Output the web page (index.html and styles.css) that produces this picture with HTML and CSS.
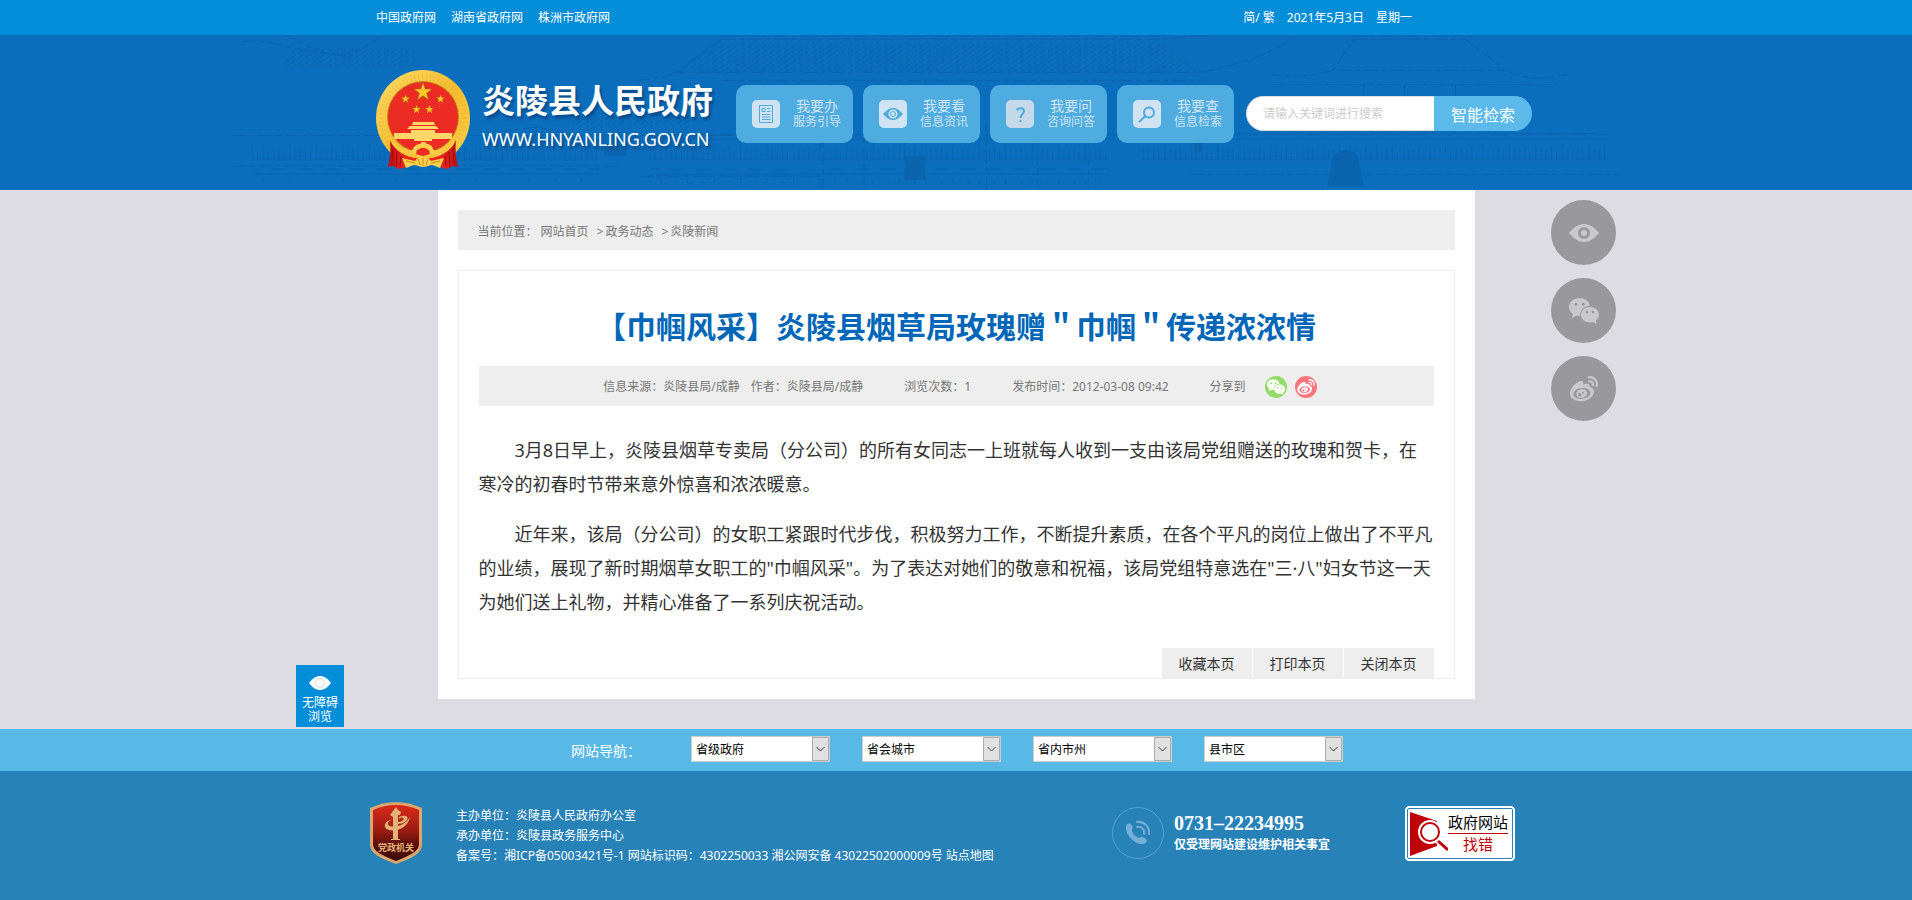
FILE: index.html
```
<!DOCTYPE html>
<html lang="zh-CN">
<head>
    <meta charset="UTF-8">
    <meta name="viewport" content="width=device-width, initial-scale=1.0">
    <title>炎陵县人民政府</title>
    <link rel="stylesheet" href="styles.css">
</head>
<body>

<!-- 公用图标 -->
<svg class="symbols" aria-hidden="true">
    <symbol id="eye" viewBox="0 0 30 18">
        <path fill="currentColor" fill-rule="evenodd" d="M0 9C5 3 10 0 15 0s10 3 15 9c-5 6-10 9-15 9S5 15 0 9zM15 3a6 6 0 1 0 0 12a6 6 0 1 0 0-12z"/>
        <circle cx="15" cy="9" r="3" fill="currentColor"/>
    </symbol>
    <symbol id="wechat" viewBox="0 0 30 26">
        <path fill="currentColor" fill-rule="evenodd" d="M10.500 0C4.700 0 0 4 0 9c0 2.800 1.500 5.300 3.900 7L3 20l4.600-2.400c1 .3 2.400.4 3.600.4C10.500 12 15 8 21 7.700C20 3 15.700 0 10.500 0zM7 4.800a1.500 1.500 0 1 1 0 3a1.500 1.500 0 1 1 0-3zM14.300 4.800a1.500 1.500 0 1 1 0 3a1.500 1.500 0 1 1 0-3z"/>
        <path fill="currentColor" fill-rule="evenodd" d="M21 9c-5 0-9 3.400-9 7.700s4 7.700 9 7.700c1 0 2-.2 3-.5l3.500 2l-.8-3.200c2-1.500 3.300-3.600 3.300-6C30 12.400 26 9 21 9zM18 12.800a1.300 1.300 0 1 1 0 2.600a1.300 1.300 0 1 1 0-2.600zM24 12.800a1.300 1.300 0 1 1 0 2.600a1.300 1.300 0 1 1 0-2.600z"/>
    </symbol>
    <symbol id="weibo" viewBox="0 0 26 24">
        <path fill="currentColor" fill-rule="evenodd" d="M9.500 4.500C11.500 4 13 5 12.200 8c3-1.300 6.800-1.300 6 2c2.500.8 4 2 4 4.600c0 4.500-5.500 8.700-11.700 8.700C4.600 23.300 0 20.500 0 16.200C0 11.500 5.500 5.300 9.500 4.500zM10.700 11C6.200 11.300 3 13.900 3.200 16.800s3.700 4.600 8 4.300s7.900-2.800 7.700-5.800s-3.800-4.500-8.200-4.300z"/>
        <path fill="currentColor" fill-rule="evenodd" d="M10.600 12.300c-3.200.6-5 2.800-4.600 5s3 3.300 5.600 2.700s4.600-2.700 4.200-5s-2.700-3.100-5.200-2.700zM9 15.800a1.700 1.500 0 1 0 .1 0zM12 14.600a.8.8 0 1 0 .1 0z"/>
        <path fill="none" stroke="currentColor" stroke-width="2" stroke-linecap="round" d="M17.500 1.200c4.500-.8 8.300 3 7.200 8M17.800 5c2.300-.3 3.800 1.300 3.200 3.500"/>
    </symbol>
    <symbol id="star" viewBox="-10 -10 20 20">
        <path d="M0-10L2.400-3.100L9.500-3.100L3.800 1.200L5.900 8.100L0 4L-5.900 8.100L-3.800 1.200L-9.500-3.100L-2.400-3.100z"/>
    </symbol>
</svg>

<div class="topbar">
    <div class="wrap topbar-inner">
        <nav class="top-links">
            <a href="#">中国政府网</a>
            <a href="#">湖南省政府网</a>
            <a href="#">株洲市政府网</a>
        </nav>
        <div class="top-date">
            <span><a href="#">简</a>/ <a href="#">繁</a></span>
            <span>2021年5月3日</span>
            <span>星期一</span>
        </div>
    </div>
</div>

<header class="header">
    <!-- 背景古建筑线稿 -->
    <svg class="header-art" viewBox="0 0 1500 155" preserveAspectRatio="xMidYMid slice" aria-hidden="true">
        <defs>
            <pattern id="tiles" width="7" height="5" patternUnits="userSpaceOnUse">
                <path d="M0 5L5 0"/>
            </pattern>
            <pattern id="fence" width="26" height="34" patternUnits="userSpaceOnUse">
                <path d="M0 2H26M0 22H26M3 22V12M8 22V8M13 22V14M19 22V6M24 22V11M0 31H16"/>
            </pattern>
        </defs>
        <g class="art-line">
            <path d="M520 6H950L1010 0M520 6L475 38H990M475 38C470 42 450 46 435 46M990 38C1030 30 1060 20 1080 4M520 46H990M50 8C80 4 110 22 150 20C170 16 180 8 190 0M90 0C110 10 130 24 160 22"/>
            <path d="M1140 6H1250L1290 36H1120L1140 6zM1120 36C1100 42 1080 44 1060 40M1290 36C1310 48 1340 44 1350 40M1060 50H1340M1150 50V92M1190 50V92M1240 50V92"/>
            <path d="M620 90V155M660 85V150M700 88V140M780 88V155M830 90V150M880 90V155M440 100H620M440 140H620M1000 98H1380M980 138H1400"/>
            <path d="M900 98C940 102 960 92 990 98M300 96L340 92L380 100M40 100H420M40 130H420"/>
        </g>
        <path class="art-fill" d="M950 88h60l8 8h-26v20h-8v-18h-34zM405 115l6-6h10l6 6v5h-22zM700 120h20v24h-20zM1120 120c10-8 14-8 24 0l6 30h-36z"/>
        <path fill="url(#tiles)" d="M520 8H950L990 38H475zM100 14H220V32H90zM380 80h110v12H370z"/>
        <path fill="url(#fence)" d="M450 96H900V148H450zM930 96H1390V130H930zM60 105H400V145H60z"/>
    </svg>

    <div class="wrap header-inner">
        <a class="logo" href="#">
            <svg class="emblem" viewBox="0 0 94 100" aria-hidden="true">
                <defs>
                    <linearGradient id="gold" x1="0" y1="0" x2="1" y2="1">
                        <stop offset="0" stop-color="#ffdd6b"/>
                        <stop offset="0.5" stop-color="#f6bd2f"/>
                        <stop offset="1" stop-color="#fbd04d"/>
                    </linearGradient>
                    <linearGradient id="drape" x1="0" y1="0" x2="1" y2="0">
                        <stop offset="0" stop-color="#b90f12"/>
                        <stop offset="0.25" stop-color="#ee2420"/>
                        <stop offset="0.75" stop-color="#ee2420"/>
                        <stop offset="1" stop-color="#b90f12"/>
                    </linearGradient>
                </defs>
                <ellipse cx="47" cy="48" rx="47" ry="48" fill="url(#gold)"/>
                <circle cx="47" cy="48" r="41" fill="none" stroke="#d99718" stroke-width="7" stroke-dasharray="1 3" opacity=".25"/>
                <circle cx="47" cy="47" r="36" fill="#c58112"/>
                <circle cx="47" cy="47" r="35" fill="#ec2b24"/>
                <g fill="#ffc928" stroke="#a66412" stroke-width=".6">
                    <use href="#star" x="37.500" y="12.500" width="19" height="19"/>
                    <use href="#star" x="25" y="24.500" width="9" height="9"/>
                    <use href="#star" x="60" y="24.500" width="9" height="9"/>
                    <use href="#star" x="36" y="35" width="9" height="9"/>
                    <use href="#star" x="49" y="35" width="9" height="9"/>
                </g>
                <g fill="#ffd768">
                    <path d="M37 52H58L59 55H36zM34 56H60L63 59H31zM35 60H59V63H35z"/>
                    <path d="M18 63H76V69H56V71H38V69H18z"/>
                </g>
                <!-- 红绸 -->
                <path fill="url(#drape)" d="M14 70C18 80 28 86 38 88H56C66 86 76 80 80 70C79 80 80 88 82 97L76 96L72 99L66 98L60 92H34L28 98L22 99L18 96L12 97C14 88 15 80 14 70z"/>
                <path fill="none" stroke="#9b1010" d="M17 78L16 95M21 82L20 97M25 86L24 96M77 78L78 95M73 82L74 97M69 86L70 96"/>
                <path fill="#f9c83f" d="M13 66C20 77 29 81 38 80L40 85C29 87 16 79 13 66zM81 66C74 77 65 81 56 80L54 85C65 87 78 79 81 66z"/>
                <!-- 齿轮和麦穗 -->
                <path fill="#fbd04d" d="M36 82C37 76 41 74 44 74L46 72H49L51 74C54 74 57 76 58 82L55 85C54 80 51 78 47 78S40 80 39 85z"/>
                <path fill="#ec2b24" d="M40 84C41 80 44 79 47 79S53 80 54 84L47 86z"/>
                <path fill="#fbd04d" d="M26 88L39 91C42 85 52 85 55 91L68 88L64 98L54 94C52 98 42 98 40 94L30 98z"/>
                <path fill="none" stroke="#d08a16" d="M30 91L39 93M64 91L55 93M42 89L44 95M47 88V96M52 89L50 95"/>
            </svg>
            <span class="logo-text">
                <strong>炎陵县人民政府</strong>
                <span>WWW.HNYANLING.GOV.CN</span>
            </span>
        </a>

        <nav class="quick">
            <a href="#">
                <svg viewBox="0 0 28 28" aria-hidden="true">
                    <rect width="28" height="28" rx="5"/>
                    <path class="ink" d="M7.500 5.500H20.500V22.500H7.500z"/>
                    <path class="ink" d="M10 8.500H13V11.500H10zM15 8.500H18.500M15 11.500H18.500M10 14.500H18.500M10 17H18.500M10 19.500H18.500"/>
                </svg>
                <span><b>我要办</b>服务引导</span>
            </a>
            <a href="#">
                <svg viewBox="0 0 28 28" aria-hidden="true">
                    <rect width="28" height="28" rx="5"/>
                    <path class="solid" fill-rule="evenodd" d="M4 14C8 9.500 11 8 14 8s6 1.500 10 6c-4 4.500-7 6-10 6s-6-1.500-10-6zM14 9.500a4.500 4.500 0 1 0 0 9a4.500 4.500 0 1 0 0-9z"/>
                    <circle class="ink" cx="14" cy="14" r="2.500"/>
                </svg>
                <span><b>我要看</b>信息资讯</span>
            </a>
            <a href="#">
                <svg class="dim" viewBox="0 0 28 28" aria-hidden="true">
                    <rect width="28" height="28" rx="5"/>
                    <path class="ink thick" d="M11 10.500C11.500 7.500 18 7 18 11C18 14 14.500 14 14.500 18M14.500 20V22"/>
                </svg>
                <span><b>我要问</b>咨询问答</span>
            </a>
            <a href="#">
                <svg viewBox="0 0 28 28" aria-hidden="true">
                    <rect width="28" height="28" rx="5"/>
                    <circle class="ink thick" cx="16" cy="12.500" r="5"/>
                    <path class="ink thick" d="M12.500 16L6 22"/>
                </svg>
                <span><b>我要查</b>信息检索</span>
            </a>
        </nav>

        <form class="search" action="#">
            <input type="text" placeholder="请输入关键词进行搜索" aria-label="关键词">
            <button type="button">智能检索</button>
        </form>
    </div>
</header>

<main class="main">
    <div class="crumbs">
        <span>当前位置：</span>
        <a href="#">网站首页</a>
        <span>&gt;<a href="#">政务动态</a></span>
        <span>&gt;<a href="#">炎陵新闻</a></span>
    </div>

    <article class="article">
        <h1>【巾帼风采】炎陵县烟草局玫瑰赠＂巾帼＂传递浓浓情</h1>
        <div class="meta">
            <span class="meta-source"><span>信息来源：炎陵县局/成静</span><span>作者：炎陵县局/成静</span></span>
            <span>浏览次数：1</span>
            <span>发布时间：2012-03-08 09:42</span>
            <span class="share">
                <span>分享到</span>
                <a class="share-wechat" href="#" aria-label="微信"><svg><use href="#wechat"/></svg></a>
                <a class="share-weibo" href="#" aria-label="微博"><svg><use href="#weibo"/></svg></a>
            </span>
        </div>
        <div class="content">
            <p>3月8日早上，炎陵县烟草专卖局（分公司）的所有女同志一上班就每人收到一支由该局党组赠送的玫瑰和贺卡，在寒冷的初春时节带来意外惊喜和浓浓暖意。</p>
            <p>近年来，该局（分公司）的女职工紧跟时代步伐，积极努力工作，不断提升素质，在各个平凡的岗位上做出了不平凡的业绩，展现了新时期烟草女职工的"巾帼风采"。为了表达对她们的敬意和祝福，该局党组特意选在"三·八"妇女节这一天为她们送上礼物，并精心准备了一系列庆祝活动。</p>
        </div>
        <div class="actions">
            <button type="button">收藏本页</button>
            <button type="button">打印本页</button>
            <button type="button">关闭本页</button>
        </div>
    </article>
</main>

<div class="site-nav">
    <span class="site-nav-label">网站导航：</span>
    <div class="site-nav-list">
        <select aria-label="省级政府"><option>省级政府</option></select>
        <select aria-label="省会城市"><option>省会城市</option></select>
        <select aria-label="省内市州"><option>省内市州</option></select>
        <select aria-label="县市区"><option>县市区</option></select>
    </div>
</div>

<footer class="footer">
    <div class="footer-inner">
        <a class="badge" href="#" aria-label="党政机关">
            <svg viewBox="0 0 52 62" aria-hidden="true">
                <defs>
                    <linearGradient id="shield" x1="0" y1="0" x2="0" y2="1">
                        <stop offset="0" stop-color="#d92a1a"/>
                        <stop offset="0.45" stop-color="#9c1c13"/>
                        <stop offset="0.7" stop-color="#5c0f0b"/>
                        <stop offset="1" stop-color="#3d0806"/>
                    </linearGradient>
                </defs>
                <path fill="#dba56c" d="M0 6Q26-6 52 6V42C52 52 42 56 26 62C10 56 0 52 0 42z"/>
                <path fill="url(#shield)" d="M3 8Q26-2 49 8V42C49 50 40 53 26 59C12 53 3 50 3 42z"/>
                <g fill="#e3b277">
                    <path d="M23 9L26 5L28 8L31 10L30 13H28V37H30V38H21V37H23V15L20 13z"/>
                    <path d="M29 15C36 12 40 15 36 19C34 21 31 22 28 22V20C32 20 35 17 33 16C32 15 30 16 29 17zM23 17C18 19 16 23 20 24C27 26 36 22 40 15C38 25 28 30 19 28C12 26 14 19 23 17z"/>
                </g>
                <text x="26" y="49" text-anchor="middle">党政机关</text>
            </svg>
        </a>
        <div class="footer-info">
            <p>主办单位：炎陵县人民政府办公室</p>
            <p>承办单位：炎陵县政务服务中心</p>
            <p>备案号：<a href="#">湘ICP备05003421号-1</a> 网站标识码：4302250033 <a href="#">湘公网安备 43022502000009号</a> <a href="#">站点地图</a></p>
        </div>
        <div class="phone">
            <svg viewBox="0 0 52 52" aria-hidden="true">
                <circle cx="26" cy="26" r="25.500" fill="none" stroke="#5a9fd0"/>
                <path fill="#73add8" d="M14 19C14 17 17 16 19 17C21 19 21 21 20 23C19 25 25 31 27 31C29 29 32 30 34 32C36 34 34 37 31 37C23 38 13 28 14 19z"/>
                <path fill="none" stroke="#73add8" stroke-width="2" stroke-linecap="round" d="M25 15C32 14 38 20 37 27M25 20C30 19 33 23 32 27"/>
            </svg>
            <div class="phone-text">
                <strong>0731–22234995</strong>
                <b>仅受理网站建设维护相关事宜</b>
            </div>
        </div>
        <a class="report" href="#">
            <svg viewBox="0 0 38 44" aria-hidden="true">
                <path fill="#bf0008" d="M0 0L27 9V34L0 44z"/>
                <circle cx="20" cy="20" r="12" fill="#fff"/>
                <path stroke="#fff" stroke-width="6" d="M27 28L38 39"/>
                <circle cx="20" cy="20" r="9" fill="#fff" stroke="#bf0008" stroke-width="2"/>
                <path stroke="#bf0008" stroke-width="3" d="M28 29L38 38"/>
            </svg>
            <span class="report-text"><span>政府网站</span><em>找错</em></span>
        </a>
    </div>
</footer>

<!-- 悬浮工具 -->
<a class="barrier-free" href="#">
    <svg viewBox="0 0 22 14" aria-hidden="true">
        <path fill="#fff" d="M0 7C4 2 7 0 11 0s7 2 11 7c-4 5-7 7-11 7S4 12 0 7z"/>
        <circle cx="11" cy="7" r="4.500" fill="none" stroke="#c4e3f7"/>
    </svg>
    <span>无障碍<br>浏览</span>
</a>
<div class="side-tools">
    <a href="#" aria-label="无障碍浏览"><svg class="side-eye"><use href="#eye"/></svg></a>
    <a href="#" aria-label="微信"><svg><use href="#wechat"/></svg></a>
    <a href="#" aria-label="微博"><svg><use href="#weibo"/></svg></a>
</div>

</body>
</html>
```
FILE: styles.css
```
* {
    box-sizing: border-box;
}
body {
    margin: 0;
    min-height: 100vh;
    display: flex;
    flex-direction: column;
    background: #dddce2;
    font-family: "Noto Sans", "Noto Sans CJK SC", "Microsoft YaHei", sans-serif;
    font-size: 12px;
    line-height: 20px;
    color: #777;
}
a {
    color: inherit;
    text-decoration: none;
}
p, h1 {
    margin: 0;
}
button, input, select {
    font-family: inherit;
    margin: 0;
}
svg {
    display: block;
    flex-shrink: 0;
}
.symbols {
    position: absolute;
    width: 0;
    height: 0;
}
.wrap {
    width: 100%;
    max-width: 1160px;
    margin: 0 auto;
}

/* 顶部 */
.topbar {
    background: #048dd9;
    color: #fff;
}
.topbar-inner {
    display: flex;
    justify-content: space-between;
    align-items: center;
    height: 35px;
    padding-right: 124px;
}
.top-links {
    display: flex;
    gap: 15px;
}
.top-date {
    display: flex;
    gap: 12px;
}

/* 头部 */
.header {
    display: grid;
    background: #0b6ebc;
    overflow: hidden;
}
.header-art,
.header-inner {
    grid-area: 1 / 1;
}
.header-art {
    width: 80%;
    height: 155px;
    margin: 0 auto;
    opacity: .6;
}
.art-line,
.header-art pattern path {
    fill: none;
    stroke: #0a5fa6;
    stroke-width: 1;
}
.header-art .art-line {
    stroke-dasharray: 14 3 5 4;
}
.art-fill {
    fill: #0a5fa6;
}
.header-inner {
    z-index: 1;
    display: flex;
    align-items: center;
    min-height: 155px;
    padding-top: 2px;
}
.logo {
    display: flex;
    flex-shrink: 0;
    align-items: center;
    gap: 12px;
    width: 360px;
    padding-top: 12px;
    color: #fff;
}
.emblem {
    width: 94px;
    height: 100px;
}
.logo-text {
    display: flex;
    flex-direction: column;
    gap: 6px;
    padding-bottom: 8px;
    white-space: nowrap;
    text-shadow: 2px 3px 3px rgba(0, 40, 90, .5);
}
.logo-text strong {
    font-size: 33px;
    line-height: 40px;
}
.logo-text span {
    font-size: 18px;
    line-height: 24px;
}
.quick {
    display: flex;
    gap: 10px;
}
.quick a {
    display: flex;
    align-items: center;
    gap: 13px;
    width: 117px;
    height: 58px;
    padding-left: 16px;
    border-radius: 10px;
    background: #4eace0;
    color: #d0e3f2;
}
.quick span {
    line-height: 15px;
    text-align: center;
}
.quick b {
    display: block;
    font-size: 14px;
    line-height: 16px;
    font-weight: normal;
}
.quick svg {
    width: 28px;
    height: 28px;
    fill: #d0e3f2;
}
.quick .dim {
    fill: #c6d9e8;
}
.quick .ink {
    fill: none;
    stroke: #4eace0;
}
.quick .thick {
    stroke-width: 2;
}
.quick .solid {
    fill: #4eace0;
}
.search {
    display: flex;
    flex: 1;
    min-width: 0;
    height: 35px;
    margin-left: 12px;
}
.search input {
    flex: 1;
    min-width: 0;
    padding: 0 16px;
    border: 1px solid #ddd;
    border-right: 0;
    border-radius: 18px 0 0 18px;
    background: #fff;
    font-size: 12px;
}
.search input::placeholder {
    color: #ccc;
}
.search button {
    width: 98px;
    padding: 0;
    border: 0;
    border-radius: 0 18px 18px 0;
    background: #5cbaeb;
    color: #fff;
    font-size: 16px;
}
.header-inner .search {
    margin-right: 4px;
}

/* 正文 */
.main {
    width: 100%;
    max-width: 1037px;
    margin: 0 auto 30px;
    padding: 20px;
    background: #fff;
}
.crumbs {
    display: flex;
    gap: 3px;
    padding: 12px 20px 8px;
    margin-bottom: 20px;
    background: #eee;
}
.crumbs a + span,
.crumbs span + span {
    margin-left: 5px;
}
.crumbs span a {
    margin-left: 2px;
}
.article {
    padding: 30px 20px 0;
    border: 1px solid #eee;
}
.article h1 {
    padding: 3px 0 17px;
    font-size: 30px;
    line-height: 45px;
    text-align: center;
    color: #0066b8;
}
.meta {
    display: flex;
    justify-content: center;
    align-items: center;
    gap: 41px;
    min-height: 40px;
    padding: 1px 0 0 8px;
    background: #eee;
}
.meta-source {
    display: flex;
    gap: 11px;
}
.share {
    display: flex;
    align-items: center;
    gap: 8px;
}
.share > span {
    margin-right: 11px;
}
.share a {
    display: flex;
    align-items: center;
    justify-content: center;
    width: 22px;
    height: 22px;
    border-radius: 50%;
    color: #fff;
}
.share svg {
    width: 18px;
    height: 16px;
}
.share-wechat {
    background: #93dc68;
}
.share-weibo {
    background: #fc7680;
}
.content {
    padding-top: 27px;
    font-size: 18px;
    line-height: 34px;
    color: #333;
}
.content p {
    margin-bottom: 16px;
    text-indent: 2em;
}
.actions {
    display: flex;
    justify-content: flex-end;
    gap: 1px;
    padding-top: 13px;
}
.actions button {
    width: 90px;
    height: 30px;
    padding: 0;
    border: 0;
    background: #eee;
    color: #333;
    font-size: 14px;
}

/* 网站导航 */
.site-nav {
    display: flex;
    justify-content: center;
    align-items: center;
    gap: 50px;
    min-height: 42px;
    padding: 0 0 2px 2px;
    background: #58b8e6;
}
.site-nav-label {
    padding-top: 4px;
    font-size: 14px;
    color: #fff;
}
.site-nav-list {
    display: flex;
    gap: 32px;
}
.site-nav select {
    width: 139px;
    height: 26px;
    padding: 0 20px 0 4px;
    border: 1px solid #ccc;
    border-radius: 0;
    appearance: none;
    background: #fff url("data:image/svg+xml,%3Csvg xmlns='http://www.w3.org/2000/svg' width='17' height='24'%3E%3Cpath fill='%23e1e1e1' stroke='%23adadad' d='M.5.5h16v23H.5z'/%3E%3Cpath fill='none' stroke='%23444' d='M4.500 10l4 4l4-4'/%3E%3C/svg%3E") no-repeat right center;
    font-size: 12px;
    color: #000;
}

/* 页脚 */
.footer {
    flex: 1;
    min-height: 129px;
    background: #2782b7;
    color: #fff;
}
.footer-inner {
    display: flex;
    align-items: flex-start;
    width: 100%;
    max-width: 1172px;
    margin: 0 auto;
    padding: 31px 27px 0 0;
}
.badge svg {
    width: 52px;
    height: 62px;
}
.badge text {
    font-size: 9px;
    font-weight: bold;
    fill: #e3b277;
}
.footer-info {
    flex: 1;
    padding: 4px 0 0 34px;
}
.phone {
    display: flex;
    gap: 10px;
    padding-top: 5px;
    margin-right: 75px;
}
.phone svg {
    width: 52px;
    height: 52px;
}
.phone-text {
    display: flex;
    flex-direction: column;
    padding-top: 4px;
}
.phone-text strong {
    font-family: "Liberation Serif", "Times New Roman", serif;
    font-size: 20px;
    line-height: 24px;
}
.report {
    display: flex;
    align-items: center;
    width: 110px;
    height: 55px;
    margin-top: 4px;
    padding-left: 4px;
    border: 1px solid #fff;
    border-radius: 4px;
    background: #fff;
    outline: 1px solid #2782b7;
    outline-offset: -3px;
}
.report svg {
    width: 38px;
    height: 44px;
}
.report-text {
    display: flex;
    flex-direction: column;
    font-size: 15px;
    line-height: 21px;
    text-align: center;
    color: #000;
}
.report-text em {
    border-top: 1px solid #bf0008;
    font-style: normal;
    color: #bf0008;
}

/* 悬浮工具 */
.barrier-free {
    position: fixed;
    left: calc(50% - 660px);
    bottom: 173px;
    display: flex;
    flex-direction: column;
    align-items: center;
    gap: 6px;
    width: 48px;
    height: 62px;
    padding-top: 11px;
    background: #048dd9;
    color: #fff;
    line-height: 14px;
    text-align: center;
}
.barrier-free svg {
    width: 22px;
    height: 14px;
}
.side-tools {
    position: fixed;
    left: calc(50% + 595px);
    top: 200px;
    display: flex;
    flex-direction: column;
    gap: 13px;
}
.side-tools a {
    display: flex;
    align-items: center;
    justify-content: center;
    width: 65px;
    height: 65px;
    border-radius: 50%;
    background: #99989d;
    color: #c9c9cb;
}
.side-tools svg {
    width: 30px;
    height: 26px;
}
.side-tools .side-eye {
    height: 18px;
}
```
